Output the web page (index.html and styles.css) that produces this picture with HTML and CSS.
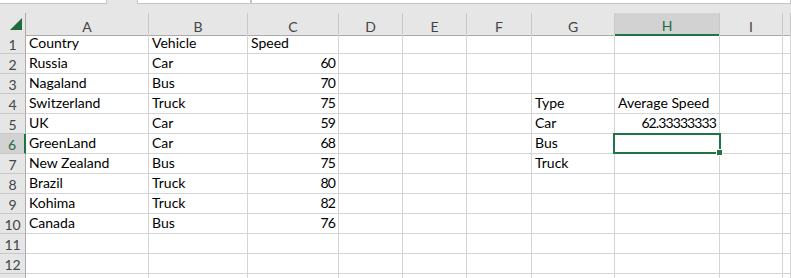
FILE: index.html
```
<!DOCTYPE html>
<html>
<head>
  <link rel="stylesheet" href="styles.css">
</head>
<body>
  <div class="top">
    <div class="box box-name"></div>
    <div class="box box-fx"></div>
    <div class="box box-formula"></div>
  </div>

  <div class="sheet">
    <div class="row head">
      <div class="corner">
        <svg width="25" height="20" viewBox="0 0 25 20"><polygon points="22,5 22,17 10,17" fill="#1e6b3f"/></svg>
      </div>
      <div class="col">A</div><div class="col">B</div><div class="col">C</div><div class="col">D</div><div class="col">E</div>
      <div class="col">F</div><div class="col">G</div><div class="col col-on">H</div><div class="col">I</div><div class="col"></div>
    </div>

    <div class="row">
      <div class="num">1</div>
      <div class="c">Country</div><div class="c">Vehicle</div><div class="c">Speed</div>
      <div class="c"></div><div class="c"></div><div class="c"></div><div class="c"></div><div class="c"></div><div class="c"></div><div class="c"></div>
    </div>
    <div class="row">
      <div class="num">2</div>
      <div class="c">Russia</div><div class="c">Car</div><div class="c n">60</div>
      <div class="c"></div><div class="c"></div><div class="c"></div><div class="c"></div><div class="c"></div><div class="c"></div><div class="c"></div>
    </div>
    <div class="row">
      <div class="num">3</div>
      <div class="c">Nagaland</div><div class="c">Bus</div><div class="c n">70</div>
      <div class="c"></div><div class="c"></div><div class="c"></div><div class="c"></div><div class="c"></div><div class="c"></div><div class="c"></div>
    </div>
    <div class="row">
      <div class="num">4</div>
      <div class="c">Switzerland</div><div class="c">Truck</div><div class="c n">75</div>
      <div class="c"></div><div class="c"></div><div class="c"></div><div class="c">Type</div><div class="c">Average Speed</div><div class="c"></div><div class="c"></div>
    </div>
    <div class="row">
      <div class="num">5</div>
      <div class="c">UK</div><div class="c">Car</div><div class="c n">59</div>
      <div class="c"></div><div class="c"></div><div class="c"></div><div class="c">Car</div><div class="c n">62.33333333</div><div class="c"></div><div class="c"></div>
    </div>
    <div class="row">
      <div class="num num-on">6</div>
      <div class="c">GreenLand</div><div class="c">Car</div><div class="c n">68</div>
      <div class="c"></div><div class="c"></div><div class="c"></div><div class="c">Bus</div><div class="c active"></div><div class="c"></div><div class="c"></div>
    </div>
    <div class="row">
      <div class="num">7</div>
      <div class="c">New Zealand</div><div class="c">Bus</div><div class="c n">75</div>
      <div class="c"></div><div class="c"></div><div class="c"></div><div class="c">Truck</div><div class="c"></div><div class="c"></div><div class="c"></div>
    </div>
    <div class="row">
      <div class="num">8</div>
      <div class="c">Brazil</div><div class="c">Truck</div><div class="c n">80</div>
      <div class="c"></div><div class="c"></div><div class="c"></div><div class="c"></div><div class="c"></div><div class="c"></div><div class="c"></div>
    </div>
    <div class="row">
      <div class="num">9</div>
      <div class="c">Kohima</div><div class="c">Truck</div><div class="c n">82</div>
      <div class="c"></div><div class="c"></div><div class="c"></div><div class="c"></div><div class="c"></div><div class="c"></div><div class="c"></div>
    </div>
    <div class="row">
      <div class="num">10</div>
      <div class="c">Canada</div><div class="c">Bus</div><div class="c n">76</div>
      <div class="c"></div><div class="c"></div><div class="c"></div><div class="c"></div><div class="c"></div><div class="c"></div><div class="c"></div>
    </div>
    <div class="row">
      <div class="num">11</div>
      <div class="c"></div><div class="c"></div><div class="c"></div>
      <div class="c"></div><div class="c"></div><div class="c"></div><div class="c"></div><div class="c"></div><div class="c"></div><div class="c"></div>
    </div>
    <div class="row">
      <div class="num">12</div>
      <div class="c"></div><div class="c"></div><div class="c"></div>
      <div class="c"></div><div class="c"></div><div class="c"></div><div class="c"></div><div class="c"></div><div class="c"></div><div class="c"></div>
    </div>
    <div class="row">
      <div class="num"></div>
      <div class="c"></div><div class="c"></div><div class="c"></div>
      <div class="c"></div><div class="c"></div><div class="c"></div><div class="c"></div><div class="c"></div><div class="c"></div><div class="c"></div>
    </div>
  </div>
</body>
</html>
```

FILE: styles.css
```
html, body {
  margin: 0;
  padding: 0;
  height: 278px;
  overflow: hidden;
  background: #fff;
  font-family: Lato, "Liberation Sans", sans-serif;
}

.top {
  height: 13px;
  background: #e6e6e6;
  display: flex;
  align-items: flex-start;
}
.box {
  height: 3px;
  background: #fff;
  border: 1px solid #c6c6c6;
  border-top: none;
}
.box-name { width: 106px; border-left: none; }
.box-fx { width: 112px; margin-left: 30px; }
.box-formula { flex: 1; }

.row {
  display: grid;
  grid-template-columns: 26px 123px 99px 91px 64px 64px 65px 83px 105px 63px 1fr;
  height: 20px;
}
.row.head {
  height: 21px;
}

.corner, .col, .num {
  background: #e6e6e6;
  color: #444;
  font-size: 14px;
  box-sizing: border-box;
}
.corner {
  border-right: 1px solid #ababab;
  border-bottom: 1px solid #ababab;
}
.corner svg { display: block; }
.col {
  border-right: 1px solid #c8c8c8;
  border-bottom: 1px solid #ababab;
  display: flex;
  justify-content: center;
  align-items: center;
  padding-top: 4px;
}
.col-on {
  background: #d2d2d2;
  color: #1e6b3f;
  border-bottom: 2px solid #217346;
}
.num {
  border-right: 1px solid #ababab;
  border-bottom: 1px solid #c8c8c8;
  display: flex;
  justify-content: center;
  align-items: center;
  padding-top: 1px;
}
.num-on {
  background: #d2d2d2;
  color: #1e6b3f;
  border-right: 2px solid #217346;
}

.c {
  box-sizing: border-box;
  border-right: 1px solid #d4d4d4;
  border-bottom: 1px solid #d4d4d4;
  font-size: 14px;
  color: #000;
  padding: 0 3px 2px 3px;
  display: flex;
  align-items: flex-end;
  white-space: nowrap;
}
.n {
  justify-content: flex-end;
  letter-spacing: -0.9px;
}

.active { position: relative; }
.active::after {
  content: "";
  position: absolute;
  left: -2px;
  top: -1px;
  right: -2px;
  bottom: -1px;
  border: 2px solid #217346;
}
.active::before {
  content: "";
  position: absolute;
  right: -4px;
  bottom: -3px;
  width: 5px;
  height: 5px;
  background: #217346;
  border: 1px solid #fff;
  z-index: 1;
}
```
